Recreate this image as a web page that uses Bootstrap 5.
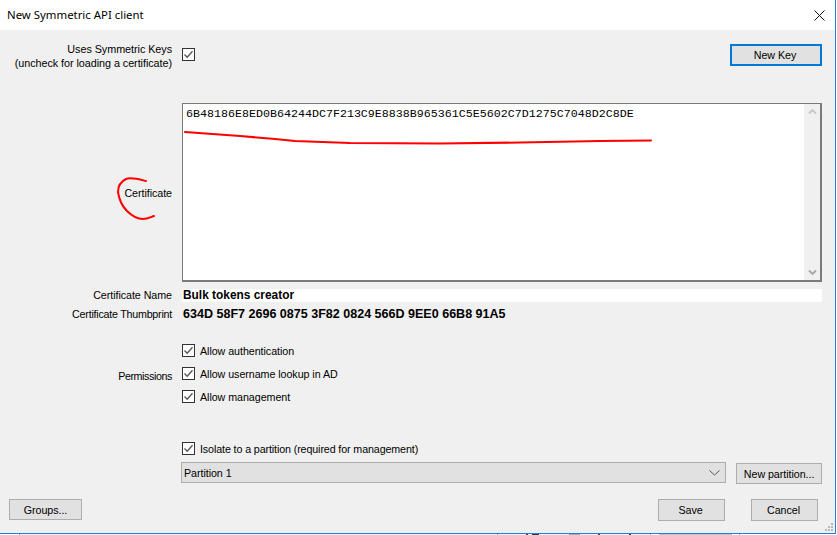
<!DOCTYPE html>
<html lang="en">
<head>
<meta charset="utf-8">
<title>New Symmetric API client</title>
<link href="https://cdn.jsdelivr.net/npm/bootstrap@5.3.0/dist/css/bootstrap.min.css" rel="stylesheet">
<style>
html,body{margin:0;height:535px;overflow:hidden;background:#fff}
body{font-family:"Liberation Sans",Arial,sans-serif;font-size:10.7px;letter-spacing:-.05px;line-height:14px;color:#000}
.dlg{width:836px;height:534px;background:#f0f0f0;border-right:1px solid #1883d7;border-bottom:1px solid #1883d7;position:relative}
.under{height:1px;width:836px;background:linear-gradient(90deg,#fff 19px,#999 19px,#999 20px,#f3f3f3 20px,#f3f3f3 497px,#aaa 497px,#aaa 498px,#f3f3f3 498px,#f3f3f3 526px,#733 526px,#733 528px,#f3f3f3 528px,#f3f3f3 532px,#335 532px,#335 539px,#f3f3f3 539px,#f3f3f3 569px,#aaa 569px,#aaa 580px,#f3f3f3 580px,#f3f3f3 598px,#733 598px,#733 600px,#f3f3f3 600px,#f3f3f3 629px,#333 629px,#333 631px,#f3f3f3 631px,#f3f3f3 650px,#aaa 650px,#aaa 651px,#fff 651px,#fff 659px,#c4c4c4 659px,#c4c4c4 732px,#fff 732px,#fff 739px,#aaa 739px,#aaa 740px,#fff 740px)}
.ttl{height:30px;background:#fff;padding:0 0 0 7px;font-family:"Noto Sans",sans-serif;font-size:11.4px;letter-spacing:0}
.ttl svg{margin-right:10px}
.form-area{padding-left:0;padding-right:13px}
.lbl{width:172px;flex:none;text-align:right}
.fld{margin-left:10px;flex:1;min-width:0}
.r-top{height:73px;padding-top:12px}
.r-top .lbl{white-space:nowrap;font-size:10.8px}
.chk.form-check-input{width:13px;height:13px;margin:0;border:1px solid #333;border-radius:0;flex:none;background-color:#fff;float:none;box-shadow:none}
.r-top .chk.form-check-input{margin-top:6px}
.chk.form-check-input:checked{background-color:#fff;border-color:#333;background-size:11px 11px;background-image:url("data:image/svg+xml,%3Csvg xmlns='http://www.w3.org/2000/svg' viewBox='0 0 11 11'%3E%3Cpath d='M1.5 5.5l2.7 2.8 5.3-6' fill='none' stroke='%23555' stroke-width='1.3'/%3E%3C/svg%3E")}
.wbtn.btn{font-size:10.7px;letter-spacing:-.05px;line-height:14px;color:#000;background:#e1e1e1;border:1px solid #adadad;border-radius:0;padding:0;display:flex;align-items:center;justify-content:center}
.wbtn.default.btn{border:2px solid #0078d7;padding-right:2px}
.newkey{width:92px;height:22px;margin-top:2px;margin-left:auto}
.certbox{height:179px;border:1px solid #7a7a7a;border-bottom-width:2px;border-right-width:2px;background:#fff;font-family:"Liberation Mono",monospace;font-size:11.67px;letter-spacing:0;line-height:14px}
.sbar{width:16px;background:#f0f0f0;flex:none}
.certtext{flex:1;min-width:0;white-space:nowrap;padding:3px 0 0 3px}
.r-cert{height:179px}
.r-cert .lbl{padding-top:83px}
.r-name{margin-top:7px;height:13px}
.r-name .fld{background:#fff;font-weight:700;font-size:11.9px;line-height:13px;letter-spacing:0;padding-left:1px}
.r-name .lbl,.r-thumb .lbl{line-height:13px}
.r-thumb{margin-top:6px;height:13px}
.r-thumb .lbl{letter-spacing:-.23px}
.r-thumb .fld{font-weight:700;font-size:12.54px;line-height:13px;letter-spacing:0;padding-left:1px}
.perm{margin-top:23px;height:59px}
.perm .lbl{padding-top:25px;letter-spacing:-.4px}
.perm-row{height:13px;margin-bottom:10px;gap:5px}
.iso{margin-top:39px;height:13px;gap:5px;margin-left:182px;letter-spacing:-.11px}
.part{margin-top:7px;margin-left:181px;height:22px;gap:10px}
.combo{width:546px;height:21px;background:#e1e1e1;border:1px solid #adadad;padding:0 5px 0 2px}
.newpart{width:86px;height:21px;margin-top:1px}
.foot{margin-top:15px;padding:0 4px 0 9px}
.groups{width:73px;height:21px}
.save.btn,.cancel.btn{width:67px;height:22px;padding-right:2px}
.cancel{margin-left:26px}
.ink{position:absolute;left:0;top:0;pointer-events:none}
.grip{position:absolute;right:1px;bottom:1px}
</style>
</head>
<body>
<div class="dlg">
  <div class="ttl d-flex align-items-center justify-content-between">
    <span>New Symmetric API client</span>
    <svg width="11" height="11" viewBox="0 0 11 11"><path d="M.5.5l10 10M10.500.5l-10 10" stroke="#111" stroke-width="1" fill="none"/></svg>
  </div>
  <div class="form-area">
    <div class="d-flex r-top">
      <div class="lbl">Uses Symmetric Keys<br>(uncheck for loading a certificate)</div>
      <div class="fld d-flex align-items-start">
        <input class="form-check-input chk" type="checkbox" checked aria-label="Uses Symmetric Keys">
        <button type="button" class="btn wbtn default newkey">New Key</button>
      </div>
    </div>
    <div class="d-flex r-cert">
      <div class="lbl">Certificate</div>
      <div class="fld certbox d-flex p-0">
        <div class="certtext">6B48186E8ED0B64244DC7F213C9E8838B965361C5E5602C7D1275C7048D2C8DE</div>
        <div class="sbar d-flex flex-column justify-content-between align-items-center py-1">
          <svg width="9" height="7" viewBox="0 0 9 7"><path d="M1 5.500l3.500-3.500 3.500 3.500" fill="none" stroke="#c8c8c8" stroke-width="1.800"/></svg>
          <svg width="9" height="7" viewBox="0 0 9 7"><path d="M1 1.500l3.500 3.500 3.500-3.500" fill="none" stroke="#a6a6a6" stroke-width="1.800"/></svg>
        </div>
      </div>
    </div>
    <div class="d-flex r-name">
      <div class="lbl">Certificate Name</div>
      <div class="fld">Bulk tokens creator</div>
    </div>
    <div class="d-flex r-thumb">
      <div class="lbl">Certificate Thumbprint</div>
      <div class="fld">634D 58F7 2696 0875 3F82 0824 566D 9EE0 66B8 91A5</div>
    </div>
    <div class="d-flex perm">
      <div class="lbl">Permissions</div>
      <div class="fld">
        <label class="d-flex align-items-center perm-row"><input class="form-check-input chk" type="checkbox" checked>Allow authentication</label>
        <label class="d-flex align-items-center perm-row"><input class="form-check-input chk" type="checkbox" checked>Allow username lookup in AD</label>
        <label class="d-flex align-items-center perm-row"><input class="form-check-input chk" type="checkbox" checked>Allow management</label>
      </div>
    </div>
    <label class="d-flex align-items-center iso"><input class="form-check-input chk" type="checkbox" checked>Isolate to a partition (required for management)</label>
    <div class="d-flex part">
      <div class="combo d-flex align-items-center justify-content-between">
        <span>Partition 1</span>
        <svg width="11" height="6" viewBox="0 0 11 6"><path d="M.5.500l5 4.500 5-4.500" fill="none" stroke="#555" stroke-width="1"/></svg>
      </div>
      <button type="button" class="btn wbtn newpart">New partition...</button>
    </div>
    <div class="d-flex foot align-items-start">
      <button type="button" class="btn wbtn groups">Groups...</button>
      <button type="button" class="btn wbtn save ms-auto">Save</button>
      <button type="button" class="btn wbtn cancel">Cancel</button>
    </div>
  </div>
  <svg class="ink" width="836" height="534" viewBox="0 0 836 534" fill="none" stroke="#f00" stroke-width="2" stroke-linecap="round" stroke-linejoin="round">
    <path d="M185 132 240 136 275 139 295 141 350 143 440 143.500 520 142.500 600 141 651 140.500"/>
    <path d="M146 181C138 179 131 177 126 179 120 182 118 187 118 192 119 199 122 206 127 211 132 216 138 219 143 219 147 219 151 217 154 216"/>
  </svg>
  <svg class="grip" width="10" height="10" viewBox="0 0 10 10" fill="#b8b8b8"><rect x="7" y="1" width="2" height="2"/><rect x="4" y="4" width="2" height="2"/><rect x="7" y="4" width="2" height="2"/><rect x="1" y="7" width="2" height="2"/><rect x="4" y="7" width="2" height="2"/><rect x="7" y="7" width="2" height="2"/></svg>
</div>
<div class="under"></div>
<script src="https://cdn.jsdelivr.net/npm/bootstrap@5.3.0/dist/js/bootstrap.bundle.min.js"></script>
</body>
</html>
